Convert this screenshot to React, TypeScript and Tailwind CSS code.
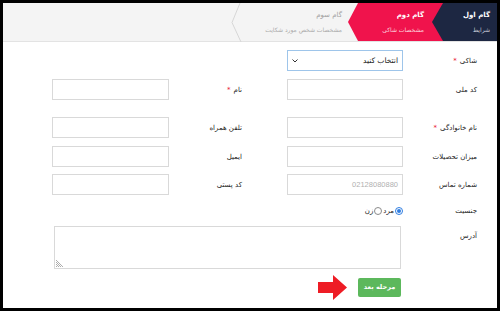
import React from 'react'

const font = "font-['DejaVu_Sans',sans-serif]"

function Label({ text, required }: { text: string; required?: boolean }) {
  return (
    <div className="w-[74px] -mr-[2px] shrink-0 text-[7px] leading-[10px] text-[#222]">
      {text}
      {required && <span className="mr-[3px] text-[#e8112d]">*</span>}
    </div>
  )
}

function Input({ placeholder, wide }: { placeholder?: string; wide?: boolean }) {
  return (
    <div
      className={`${wide ? 'w-[117px]' : 'w-[116px]'} h-[21px] shrink-0 border border-[#d9d9d9] bg-white flex items-center pr-[4px] font-['Liberation_Sans',sans-serif] text-[7.5px] text-[#b0b0b0]`}
    >
      {placeholder}
    </div>
  )
}

function Row({
  right,
  rightReq,
  left,
  leftReq,
  rightPlaceholder,
  className,
}: {
  right: string
  rightReq?: boolean
  left: string
  leftReq?: boolean
  rightPlaceholder?: string
  className: string
}) {
  return (
    <div className={`flex items-center pr-[22px] ${className}`}>
      <Label text={right} required={rightReq} />
      <Input placeholder={rightPlaceholder} />
      <div className="w-[45px] shrink-0" />
      <div className="w-[73px] shrink-0 text-[7px] leading-[10px] text-[#222]">
        {left}
        {leftReq && <span className="mr-[3px] text-[#e8112d]">*</span>}
      </div>
      <Input wide />
    </div>
  )
}

export default function App() {
  return (
    <div className={`w-[500px] h-[311px] bg-black p-[3px] ${font}`}>
      <div dir="rtl" className="w-full h-full bg-white flex flex-col overflow-hidden">
        {/* steps */}
        <div className="flex h-[39px] shrink-0 bg-[#f4f4f4] border-b border-[#e3e3e3]">
          <div className="relative z-30 w-[65px] h-full bg-[#1d2742] pr-[7px] flex flex-col justify-center gap-[5px] [clip-path:polygon(11px_0,100%_0,100%_100%,11px_100%,0_50%)]">
            <div className="text-[7px] leading-[9px] font-bold text-white">گام اول</div>
            <div className="text-[6px] leading-[9px] text-[#c5c9d4]">شرایط</div>
          </div>
          <div className="relative z-20 -mr-[11px] w-[95px] h-full bg-[#f0134c] pr-[19px] flex flex-col justify-center gap-[5px] [clip-path:polygon(10px_0,100%_0,100%_100%,10px_100%,0_50%)]">
            <div className="text-[7px] leading-[9px] font-bold text-white">گام دوم</div>
            <div className="text-[6px] leading-[9px] text-[#fcd3de]">مشخصات شاکی</div>
          </div>
          <div className="relative z-10 -mr-[10px] w-[127px] h-full flex">
            <div className="flex-1 pr-[16px] flex flex-col justify-center gap-[5px]">
              <div className="text-[7px] leading-[9px] text-[#a0a0a0]">گام سوم</div>
              <div className="text-[6px] leading-[9px] text-[#aaaaaa] whitespace-nowrap">مشخصات شخص مورد شکایت</div>
            </div>
            <svg width="12" height="39" viewBox="0 0 12 39" className="shrink-0">
              <path d="M9 0 L1 19.5 L10 39" fill="none" stroke="#d6d6d6" strokeWidth="1" />
            </svg>
          </div>
        </div>

        {/* select */}
        <div className="flex items-center pr-[22px] mt-[8px]">
          <Label text="شاکی" required />
          <div className="w-[116px] h-[21px] shrink-0 border border-[#9ec5ea] bg-white flex items-center justify-between pr-[4px] pl-[4px] text-[7.5px] text-[#222]">
            <span>انتخاب کنید</span>
            <svg width="6" height="4" viewBox="0 0 6 4">
              <path d="M0.5 0.5 L3 3 L5.5 0.5" fill="none" stroke="#333" strokeWidth="1" />
            </svg>
          </div>
        </div>

        <Row className="mt-[8px]" right="کد ملی" left="نام" leftReq />
        <Row className="mt-[17px]" right="نام خانوادگی" rightReq left="تلفن همراه" />
        <Row className="mt-[8px]" right="میزان تحصیلات" left="ایمیل" />
        <Row className="mt-[7px]" right="شماره تماس" left="کد پستی" rightPlaceholder="02128080880" />

        {/* gender */}
        <div className="flex items-center pr-[22px] mt-[10px] h-[12px]">
          <Label text="جنسیت" />
          <div className="flex items-center gap-[1px] text-[7px] leading-[10px] text-[#222]">
            <span className="w-[8px] h-[8px] rounded-full border border-[#2f7de1] bg-white flex items-center justify-center">
              <span className="w-[4px] h-[4px] rounded-full bg-[#2f7de1]" />
            </span>
            <span>مرد</span>
            <span className="w-[8px] h-[8px] rounded-full border border-[#8a8a8a] bg-white" />
            <span>زن</span>
          </div>
        </div>

        {/* address */}
        <div className="flex items-start pr-[22px] mt-[9px]">
          <div className="w-[74px] -mr-[2px] shrink-0 pt-[5px] text-[7px] leading-[10px] text-[#222]">آدرس</div>
          <div className="relative mr-[2px] w-[347px] h-[43px] border border-[#d9d9d9] bg-white">
            <svg width="8" height="8" viewBox="0 0 8 8" className="absolute left-[1px] bottom-[1px]">
              <path d="M0 1 L7 8 M0 3 L5 8 M0 5 L3 8 M0 7 L1 8" stroke="#999" strokeWidth="0.8" />
            </svg>
          </div>
        </div>

        {/* next */}
        <div className="flex items-center pr-[96px] mt-[6px]">
          <button className="w-[43px] h-[19px] rounded-[2px] bg-[#5cb85c] text-white text-[6.5px] font-bold">
            مرحله بعد
          </button>
          <svg width="30" height="25" viewBox="0 0 30 25" className="mr-[10px]">
            <path d="M0 7 L15 7 L15 0 L29 12.5 L15 25 L15 18 L0 18 Z" fill="#ee1c25" />
          </svg>
        </div>
      </div>
    </div>
  )
}
